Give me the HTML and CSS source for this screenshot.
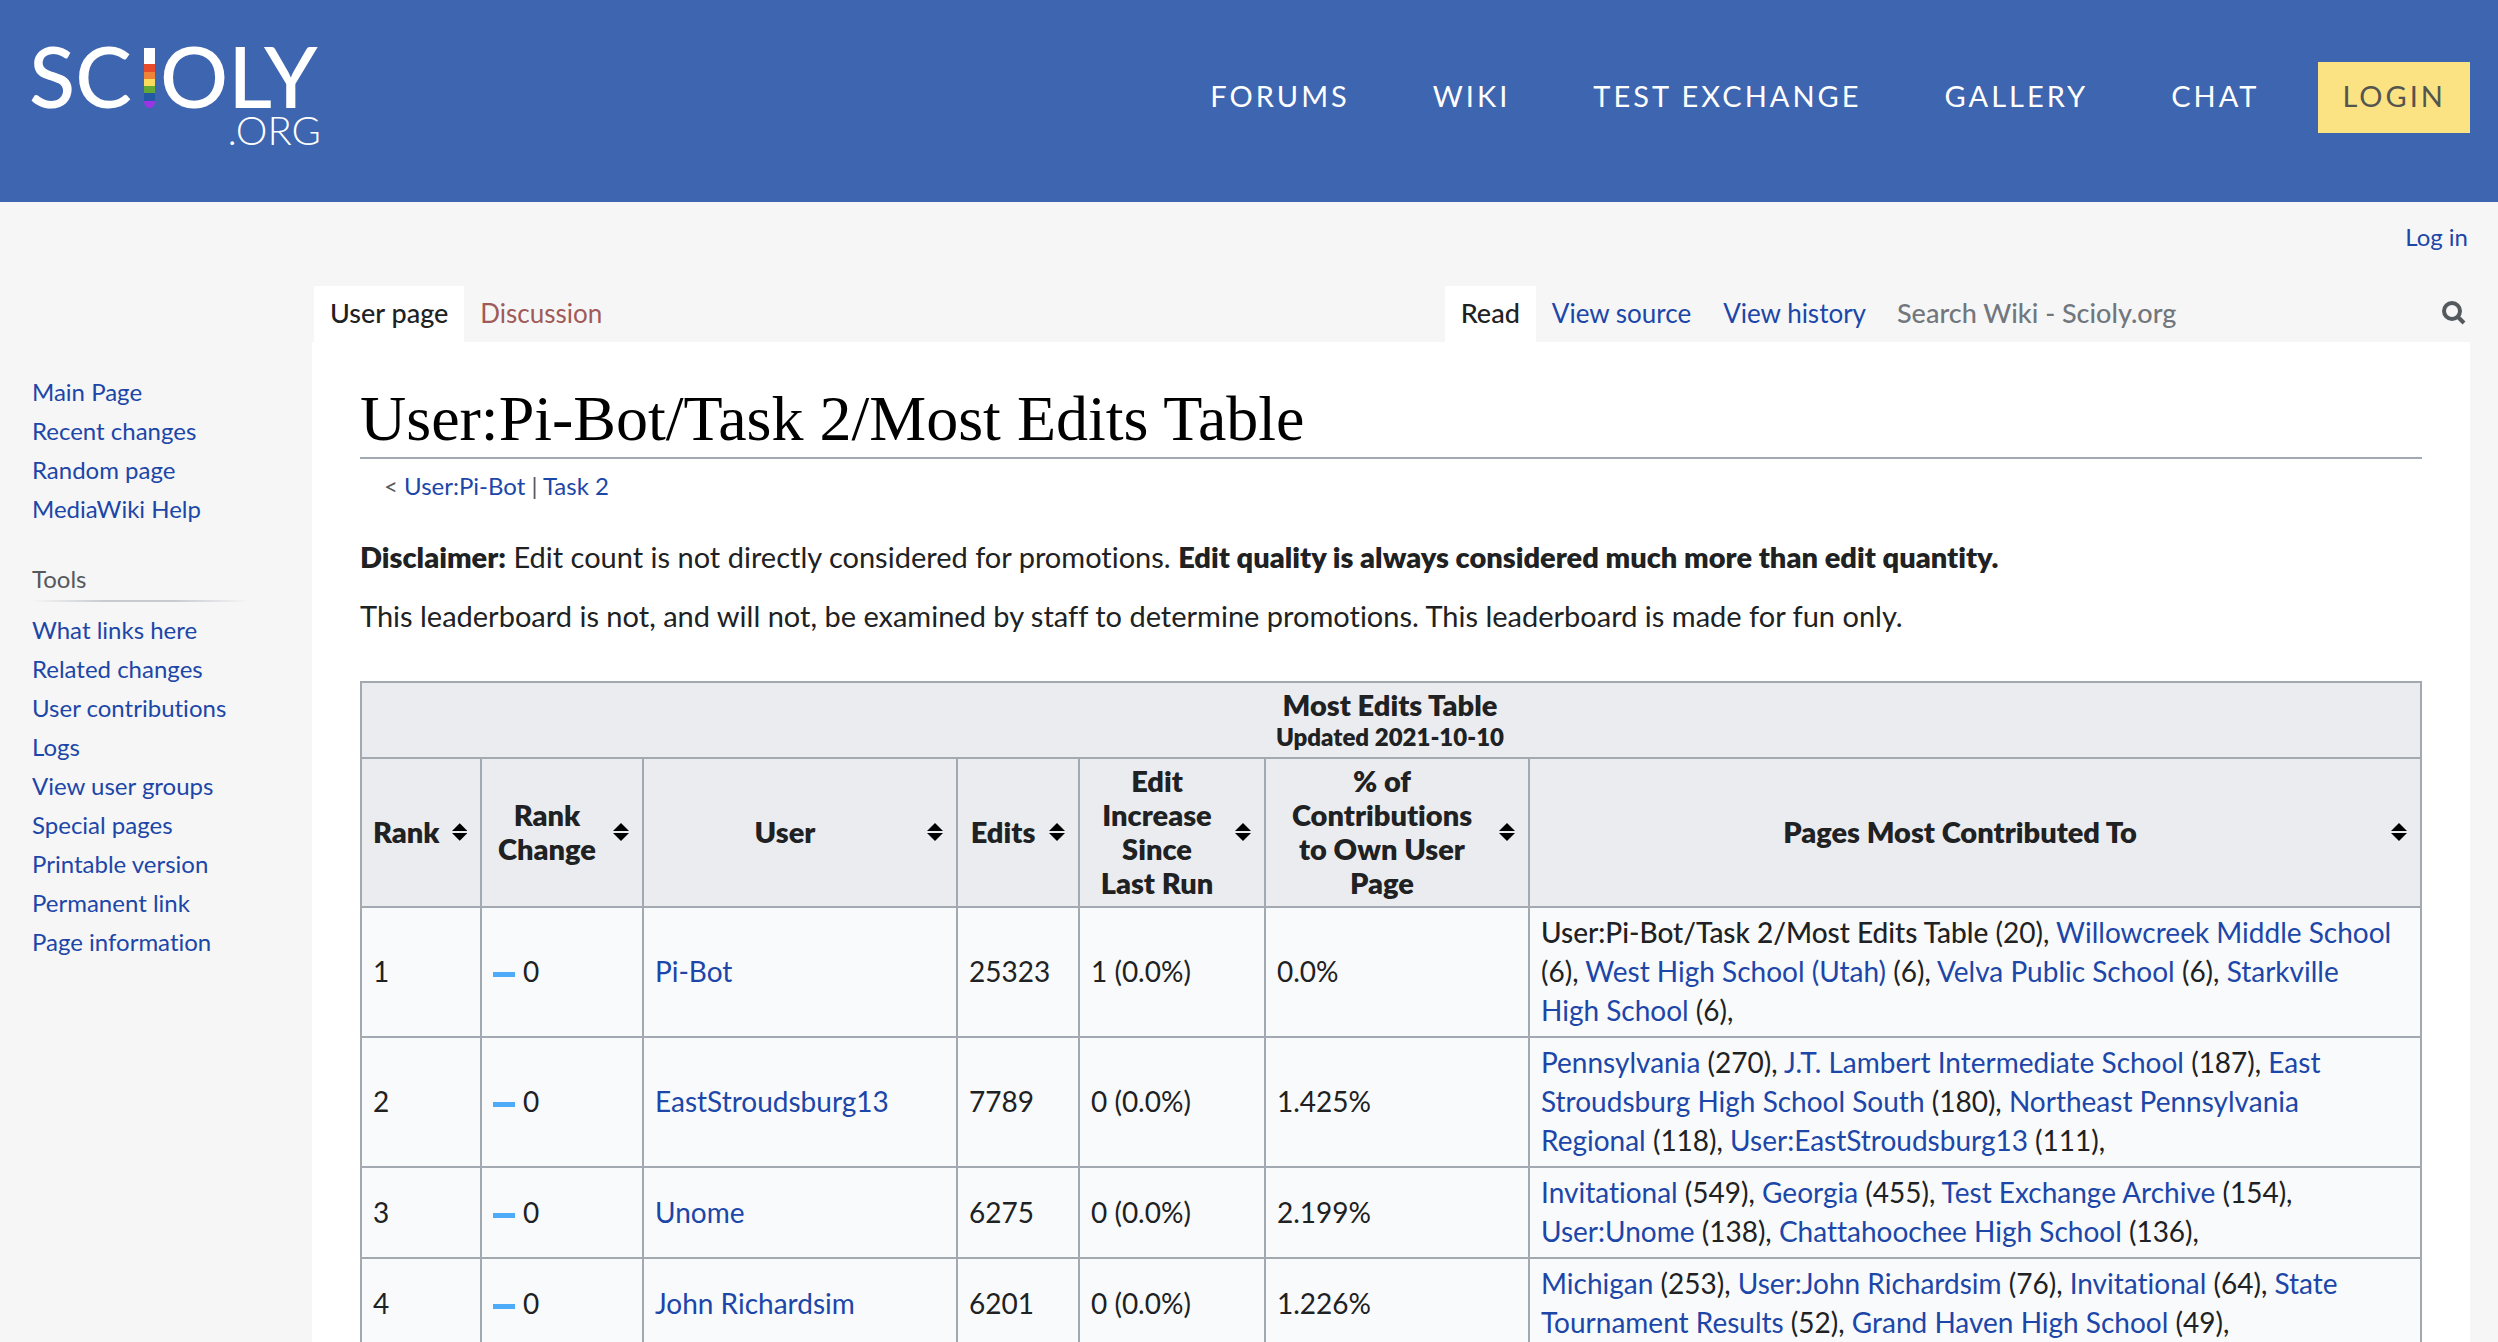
FILE: index.html
```html
<!DOCTYPE html>
<html lang="en">
<head>
<meta charset="utf-8">
<title>User:Pi-Bot/Task 2/Most Edits Table - Wiki - Scioly.org</title>
<link rel="stylesheet" href="styles.css">
</head>
<body>
<header class="site-header">
  <a class="logo" href="#" aria-label="Scioly.org home">
    <svg width="292" height="104" viewBox="0 0 292 104">
      <text class="logo-name" x="-3" y="64">SC</text>
      <text class="logo-name" x="128" y="64">OLY</text>
      <text class="logo-domain" x="289" y="101" text-anchor="end">.ORG</text>
      <path d="M112 4h11v17h-11z" fill="#fff"/>
      <path d="M112 20h11v8h-11z" fill="#e84b2c"/>
      <path d="M112 28h11v7h-11z" fill="#ef8439"/>
      <path d="M112 35h11v7h-11z" fill="#fbdb5b"/>
      <path d="M112 42h11v7h-11z" fill="#62a834"/>
      <path d="M112 49h11v8h-11z" fill="#2458a4"/>
      <path d="M112 57h11v1q-1 6-5.500 6t-5.500-6z" fill="#9a35e6"/>
    </svg>
  </a>
  <nav class="site-nav">
    <a href="#">FORUMS</a>
    <a href="#">WIKI</a>
    <a href="#">TEST EXCHANGE</a>
    <a href="#">GALLERY</a>
    <a href="#">CHAT</a>
    <a class="login" href="#">LOGIN</a>
  </nav>
</header>
<div class="wiki">
  <aside class="sidebar">
    <ul>
      <li><a href="#">Main Page</a></li>
      <li><a href="#">Recent changes</a></li>
      <li><a href="#">Random page</a></li>
      <li><a href="#">MediaWiki Help</a></li>
    </ul>
    <h3>Tools</h3>
    <ul>
      <li><a href="#">What links here</a></li>
      <li><a href="#">Related changes</a></li>
      <li><a href="#">User contributions</a></li>
      <li><a href="#">Logs</a></li>
      <li><a href="#">View user groups</a></li>
      <li><a href="#">Special pages</a></li>
      <li><a href="#">Printable version</a></li>
      <li><a href="#">Permanent link</a></li>
      <li><a href="#">Page information</a></li>
    </ul>
  </aside>
  <div class="main">
    <div class="personal"><a href="#">Log in</a></div>
    <div class="tabs">
      <a class="tab selected" href="#">User page</a>
      <a class="tab new" href="#">Discussion</a>
      <a class="tab selected views" href="#">Read</a>
      <a class="tab" href="#">View source</a>
      <a class="tab" href="#">View history</a>
      <form class="search">
        <input type="search" aria-label="Search Wiki - Scioly.org" placeholder="Search Wiki - Scioly.org">
        <button type="button" aria-label="Search">
          <svg width="26" height="26" viewBox="0 0 26 26" fill="none" stroke="#54595d"><circle cx="11" cy="10" r="8" stroke-width="4"/><path d="M17 16l6 6" stroke-width="4"/></svg>
        </button>
      </form>
    </div>
    <main class="content">
      <h1>User:Pi-Bot/Task 2/Most Edits Table</h1>
      <div class="subpages">&lt; <a href="#">User:Pi-Bot</a> | <a href="#">Task 2</a></div>
      <p><b>Disclaimer:</b> Edit count is not directly considered for promotions. <b>Edit quality is always considered much more than edit quantity.</b></p>
      <p>This leaderboard is not, and will not, be examined by staff to determine promotions. This leaderboard is made for fun only.</p>
      <table>
        <colgroup><col class="c-rank"><col class="c-change"><col class="c-user"><col class="c-edits"><col class="c-increase"><col class="c-own"><col></colgroup>
        <thead>
          <tr><th colspan="7">Most Edits Table<small>Updated 2021-10-10</small></th></tr>
          <tr>
            <th><button type="button" class="sort"><span>Rank</span><svg width="16" height="18" viewBox="0 0 16 18"><path d="M0 8l8-8 8 8zM0 10h16l-8 8z"/></svg></button></th>
            <th><button type="button" class="sort"><span>Rank<br>Change</span><svg width="16" height="18" viewBox="0 0 16 18"><path d="M0 8l8-8 8 8zM0 10h16l-8 8z"/></svg></button></th>
            <th><button type="button" class="sort"><span>User</span><svg width="16" height="18" viewBox="0 0 16 18"><path d="M0 8l8-8 8 8zM0 10h16l-8 8z"/></svg></button></th>
            <th><button type="button" class="sort"><span>Edits</span><svg width="16" height="18" viewBox="0 0 16 18"><path d="M0 8l8-8 8 8zM0 10h16l-8 8z"/></svg></button></th>
            <th><button type="button" class="sort"><span>Edit<br>Increase<br>Since<br>Last Run</span><svg width="16" height="18" viewBox="0 0 16 18"><path d="M0 8l8-8 8 8zM0 10h16l-8 8z"/></svg></button></th>
            <th><button type="button" class="sort"><span>% of<br>Contributions<br>to Own User<br>Page</span><svg width="16" height="18" viewBox="0 0 16 18"><path d="M0 8l8-8 8 8zM0 10h16l-8 8z"/></svg></button></th>
            <th><button type="button" class="sort"><span>Pages Most Contributed To</span><svg width="16" height="18" viewBox="0 0 16 18"><path d="M0 8l8-8 8 8zM0 10h16l-8 8z"/></svg></button></th>
          </tr>
        </thead>
        <tbody>
          <tr>
            <td>1</td><td><i class="same"></i>0</td><td><a href="#">Pi-Bot</a></td><td>25323</td><td>1 (0.0%)</td><td>0.0%</td>
            <td><span class="self">User:Pi-Bot/Task 2/Most Edits Table</span> (20), <a href="#">Willowcreek Middle School</a> (6), <a href="#">West High School (Utah)</a> (6), <a href="#">Velva Public School</a> (6), <a href="#">Starkville High&nbsp;School</a> (6),</td>
          </tr>
          <tr>
            <td>2</td><td><i class="same"></i>0</td><td><a href="#">EastStroudsburg13</a></td><td>7789</td><td>0 (0.0%)</td><td>1.425%</td>
            <td><a href="#">Pennsylvania</a> (270), <a href="#">J.T. Lambert Intermediate School</a> (187), <a href="#">East Stroudsburg High School South</a> (180), <a href="#">Northeast Pennsylvania Regional</a> (118), <a href="#">User:EastStroudsburg13</a> (111),</td>
          </tr>
          <tr>
            <td>3</td><td><i class="same"></i>0</td><td><a href="#">Unome</a></td><td>6275</td><td>0 (0.0%)</td><td>2.199%</td>
            <td><a href="#">Invitational</a> (549), <a href="#">Georgia</a> (455), <a href="#">Test Exchange Archive</a> (154), <a href="#">User:Unome</a> (138), <a href="#">Chattahoochee High School</a> (136),</td>
          </tr>
          <tr>
            <td>4</td><td><i class="same"></i>0</td><td><a href="#">John Richardsim</a></td><td>6201</td><td>0 (0.0%)</td><td>1.226%</td>
            <td><a href="#">Michigan</a> (253), <a href="#">User:John Richardsim</a> (76), <a href="#">Invitational</a> (64), <a href="#">State Tournament Results</a> (52), <a href="#">Grand Haven High School</a> (49),</td>
          </tr>
        </tbody>
      </table>
    </main>
  </div>
</div>
</body>
</html>
```

FILE: styles.css
```css
* { box-sizing: border-box; }
body {
  margin: 0;
  background: #f6f6f6;
  color: #202122;
  font: 28px/39px Lato, "Open Sans", sans-serif;
  font-variant-ligatures: none;
}
a { color: #1c46a8; text-decoration: none; }
b { font-weight: 800; }
ul { list-style: none; margin: 0; padding: 0; }
button { border: 0; padding: 0; background: none; color: inherit; font: inherit; cursor: pointer; }

.site-header {
  display: flex;
  justify-content: space-between;
  align-items: flex-start;
  height: 202px;
  padding: 0 28px 0 32px;
  background: #3e65af;
}
.logo { margin-top: 44px; }
.logo svg { display: block; overflow: visible; }
.logo text { fill: #fff; }
.logo-name { font-size: 85px; font-weight: 500; }
.logo-domain { font-size: 40px; font-weight: 300; }
.site-nav { display: flex; margin-top: 62px; gap: 35px; }
.site-nav a {
  padding: 0 24px 4px;
  color: #fff;
  font-size: 29px;
  line-height: 67px;
  letter-spacing: 3px;
}
.site-nav .login { background: #fbe384; color: #55554f; }

.wiki { display: flex; padding-right: 28px; }
.sidebar {
  flex: none;
  width: 312px;
  padding: 170px 64px 0 32px;
  font-size: 24px;
}
.sidebar h3 {
  margin: 31px 0 8px;
  padding-bottom: 2px;
  border-bottom: 2px solid;
  border-image: linear-gradient(to right, #c8ccd100, #c8ccd1 33%, #c8ccd1 66%, #c8ccd100) 1;
  color: #54595d;
  font-size: 24px;
  font-weight: 400;
}
.main { flex: 1; min-width: 0; }
.personal {
  height: 84px;
  padding: 15px 2px 0;
  text-align: right;
  font-size: 24px;
}
.tabs {
  display: flex;
  height: 56px;
  padding-left: 2px;
  font-size: 26px;
  line-height: 54px;
}
.tab { padding: 0 16px; }
.tab.selected { background: #fff; color: #202122; font-size: 27px; font-weight: 500; }
.tab.new { color: #a05a58; }
.tab.views { margin-left: auto; }
.search { display: flex; width: 588px; padding: 0 3px 0 15px; }
.search input {
  flex: 1;
  min-width: 0;
  border: 0;
  padding: 0 0 2px;
  background: none;
  font: inherit;
  font-size: 27px;
  font-weight: 500;
}
.search input::placeholder { color: #72777d; opacity: 1; }
.search svg { display: block; }

.content { padding: 39px 48px 40px; background: #fff; }
h1 {
  margin: 0;
  border-bottom: 2px solid #a2a9b1;
  color: #000;
  font: 64px/76px "Liberation Serif", serif;
}
.subpages {
  margin: 7px 24px 32px;
  color: #54595d;
  font-size: 24px;
}
.content p { margin: 0 0 20px; font-size: 29px; }
table {
  width: 100%;
  margin-top: 46px;
  border-collapse: collapse;
  table-layout: fixed;
  background: #f8fafc;
}
.c-rank { width: 120px; }
.c-change { width: 162px; }
.c-user { width: 314px; }
.c-edits { width: 122px; }
.c-increase { width: 186px; }
.c-own { width: 264px; }
th, td { border: 2px solid #a2a9b1; padding: 5px 11px 6px; text-align: left; }
th {
  padding-right: 13px;
  background: #ebecf0;
  font-size: 29px;
  font-weight: 800;
  line-height: 34px;
  text-align: center;
}
th small { display: block; font-size: 24px; line-height: 29px; }
.sort { display: flex; align-items: center; gap: 12px; width: 100%; }
.sort span { flex: 1; white-space: nowrap; }
.same {
  display: inline-block;
  width: 22px;
  height: 5px;
  margin-right: 8px;
  background: #4dabf7;
  vertical-align: middle;
}
.self { font-weight: 500; }
```
